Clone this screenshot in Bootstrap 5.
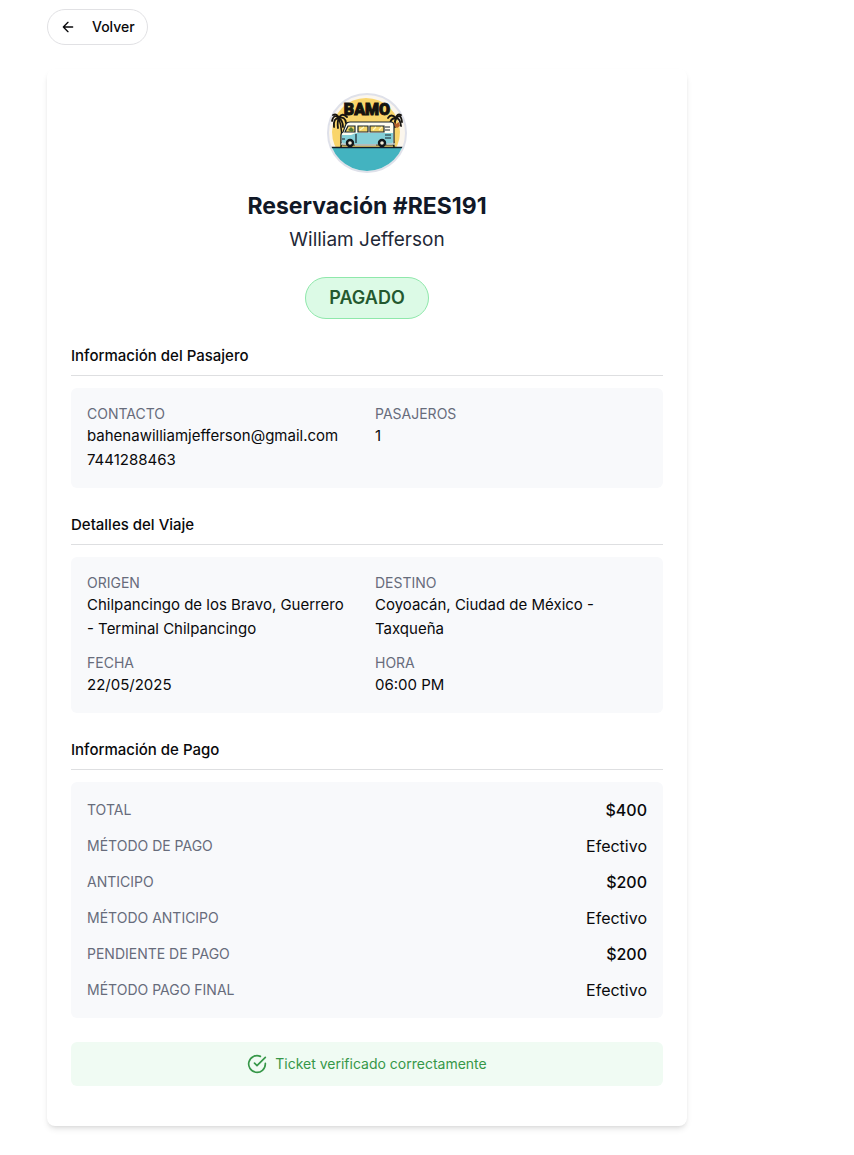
<!DOCTYPE html>
<html lang="es">
<head>
<meta charset="utf-8">
<meta name="viewport" content="width=device-width, initial-scale=1">
<title>Reservación #RES191</title>
<link href="https://cdn.jsdelivr.net/npm/bootstrap@5.3.0/dist/css/bootstrap.min.css" rel="stylesheet">
<style>
  body { font-family: Inter, "Liberation Sans", sans-serif; font-size: 15px; line-height: 24px; color: #09090b; background: #fff; }
  .page { max-width: 760px; padding: 9px 0 28px; }
  .btn-back { height: 36px; padding: 0 12px; gap: 16px; font-size: 14px; line-height: 20px; font-weight: 500; color: #09090b; border: 1px solid #e1e1e4; background: #fff; }
  .ticket { max-width: 640px; margin-top: 24px; padding: 24px 24px 40px; border-radius: 8px; background: #fff; box-shadow: 0 4px 6px -1px rgba(0,0,0,.1), 0 2px 4px -2px rgba(0,0,0,.1); }
  .ticket-title { font-size: 23px; line-height: 32px; font-weight: 700; color: #111827; margin: 17px 0 4px; }
  .ticket-name { font-size: 19px; line-height: 28px; color: #1f2937; margin-bottom: 23px; }
  .status { padding: 6px 23px; font-size: 18px; line-height: 28px; font-weight: 600; color: #24582f; background: #dcfae6; border: 1px solid #8fe8ab; }
  .section-title { font-size: 15px; line-height: 24px; font-weight: 500; padding: 1px 0 7px; margin: 24px 0 12px; border-bottom: 1px solid #dedfe1; }
  .panel { padding: 16px; border-radius: 6px; background: #f8f9fb; }
  .panel dl, .panel dd { margin: 0; }
  .panel dt { font-size: 14px; line-height: 20px; font-weight: 400; color: #676c7b; }
  .pair-list { grid-template-columns: 1fr 1fr; gap: 12px 16px; }
  .pay-list { gap: 12px; font-size: 16px; }
  .pay-list dt { line-height: 24px; }
  .verified { margin-top: 24px; height: 44px; gap: 8px; border-radius: 6px; font-size: 14px; line-height: 20px; color: #369748; background: #f0fbf3; }
</style>
</head>
<body>
<main class="page mx-auto">
  <button type="button" class="btn btn-back rounded-pill d-inline-flex align-items-center">
    <svg width="16" height="16" viewBox="0 0 24 24" fill="none" stroke="currentColor" stroke-width="2" stroke-linecap="round" stroke-linejoin="round" aria-hidden="true"><path d="m12 19-7-7 7-7M19 12H5"/></svg>
    Volver
  </button>

  <article class="ticket">
    <header class="text-center">
      <svg class="d-block mx-auto" width="80" height="80" viewBox="0 0 80 80" role="img" aria-label="BAMO">
        <defs><clipPath id="disc"><circle cx="40" cy="40" r="38"/></clipPath></defs>
        <circle cx="40" cy="40" r="39" fill="#fbf6ed" stroke="#dfe1ea" stroke-width="2"/>
        <g clip-path="url(#disc)">
          <circle cx="39" cy="39" r="34" fill="#f9d56b"/>
          <path d="M0 54h80v26H0z" fill="#43b3c0"/>
          <path d="M4 54.500h72" stroke="#14202a" stroke-width="1.500"/>
        </g>
        <g fill="none" stroke="#171511" stroke-linecap="round">
          <path stroke-width="1.500" d="M12 26q4 11 2 28M69 26q-5 10-2 28"/>
          <path stroke-width="1.800" d="M12 25Q7 20 5 28M12 25Q6 25 7 34M12 25q-2 4-1 10M12 25q6-2 7 5M12 25q3-6 8-1M12 25q-2-5-6-3M12 25q4 3 4 9M69 25q-5-5-8 0M69 25q-6 0-6 7M69 25q-2 4-1 9M69 25q5-5 6 4M69 25q4 0 5 8M69 25q1-5 5-3"/>
        </g>
        <path d="M67 29l2 2 3-2 1 4-3 2-3-2z" fill="#b45f2c"/>
        <path d="M19 31q1-2 4-2h41q3 0 3 4v17q0 2-2 2H16q-2 0-2-3v-7q0-2 2-3z" fill="#fffdf0" stroke="#16222a" stroke-width="1.200"/>
        <path d="M15 42h9l5-2h37v9q0 2-2 2H17q-2 0-2-3z" fill="#84cfd7"/>
        <path d="M21 33h7v6H18zM31 33h10v6H31zM43 33h14v6H43z" fill="#f5d567" stroke="#16222a" stroke-width="1.200"/>
        <path d="M21 37l3-3 3 3-2 2z" fill="#50773a"/>
        <path d="M33 37l4-3M46 37l3-3M52 37l3-3" stroke="#fff8c2" stroke-width="1.200"/>
        <path d="M58 34h5M58 37h5M58 42h6M58 45h6M29 41v9M15 46h3" stroke="#16222a" stroke-width="1.200"/>
        <path d="M14 51h5M28 52h21M60 51h8" stroke="#c4cbc9" stroke-width="1.500"/>
        <g fill="#f4edda" stroke="#12161a" stroke-width="2.400"><circle cx="23" cy="50" r="3"/><circle cx="55" cy="50" r="3"/></g>
        <text x="40" y="22" text-anchor="middle" font-family="Roboto, sans-serif" font-size="16" font-weight="900" fill="#15130e" stroke="#15130e" stroke-width="1">BAMO</text>
      </svg>
      <h1 class="ticket-title">Reservación #RES191</h1>
      <p class="ticket-name">William Jefferson</p>
      <div><span class="status rounded-pill d-inline-block align-top">PAGADO</span></div>
    </header>

    <section>
      <h2 class="section-title">Información del Pasajero</h2>
      <div class="panel">
        <dl class="pair-list d-grid">
          <div><dt>CONTACTO</dt><dd>bahenawilliamjefferson@gmail.com</dd><dd>7441288463</dd></div>
          <div><dt>PASAJEROS</dt><dd>1</dd></div>
        </dl>
      </div>
    </section>

    <section>
      <h2 class="section-title">Detalles del Viaje</h2>
      <div class="panel">
        <dl class="pair-list d-grid">
          <div><dt>ORIGEN</dt><dd>Chilpancingo de los Bravo, Guerrero <span class="text-nowrap">- Terminal Chilpancingo</span></dd></div>
          <div><dt>DESTINO</dt><dd>Coyoacán, Ciudad de México - Taxqueña</dd></div>
          <div><dt>FECHA</dt><dd>22/05/2025</dd></div>
          <div><dt>HORA</dt><dd>06:00 PM</dd></div>
        </dl>
      </div>
    </section>

    <section>
      <h2 class="section-title">Información de Pago</h2>
      <div class="panel">
        <dl class="pay-list d-flex flex-column">
          <div class="d-flex justify-content-between"><dt>TOTAL</dt><dd class="fw-medium">$400</dd></div>
          <div class="d-flex justify-content-between"><dt>MÉTODO DE PAGO</dt><dd>Efectivo</dd></div>
          <div class="d-flex justify-content-between"><dt>ANTICIPO</dt><dd class="fw-medium">$200</dd></div>
          <div class="d-flex justify-content-between"><dt>MÉTODO ANTICIPO</dt><dd>Efectivo</dd></div>
          <div class="d-flex justify-content-between"><dt>PENDIENTE DE PAGO</dt><dd class="fw-medium">$200</dd></div>
          <div class="d-flex justify-content-between"><dt>MÉTODO PAGO FINAL</dt><dd>Efectivo</dd></div>
        </dl>
      </div>
    </section>

    <div class="verified d-flex align-items-center justify-content-center" role="status">
      <svg width="20" height="20" viewBox="0 0 24 24" fill="none" stroke="currentColor" stroke-width="2" stroke-linecap="round" stroke-linejoin="round" aria-hidden="true"><path d="M22 11.080V12a10 10 0 1 1-5.930-9.140"/><path d="m9 11 3 3L22 4"/></svg>
      <span>Ticket verificado correctamente</span>
    </div>
  </article>
</main>
<script src="https://cdn.jsdelivr.net/npm/bootstrap@5.3.0/dist/js/bootstrap.bundle.min.js"></script>
</body>
</html>
